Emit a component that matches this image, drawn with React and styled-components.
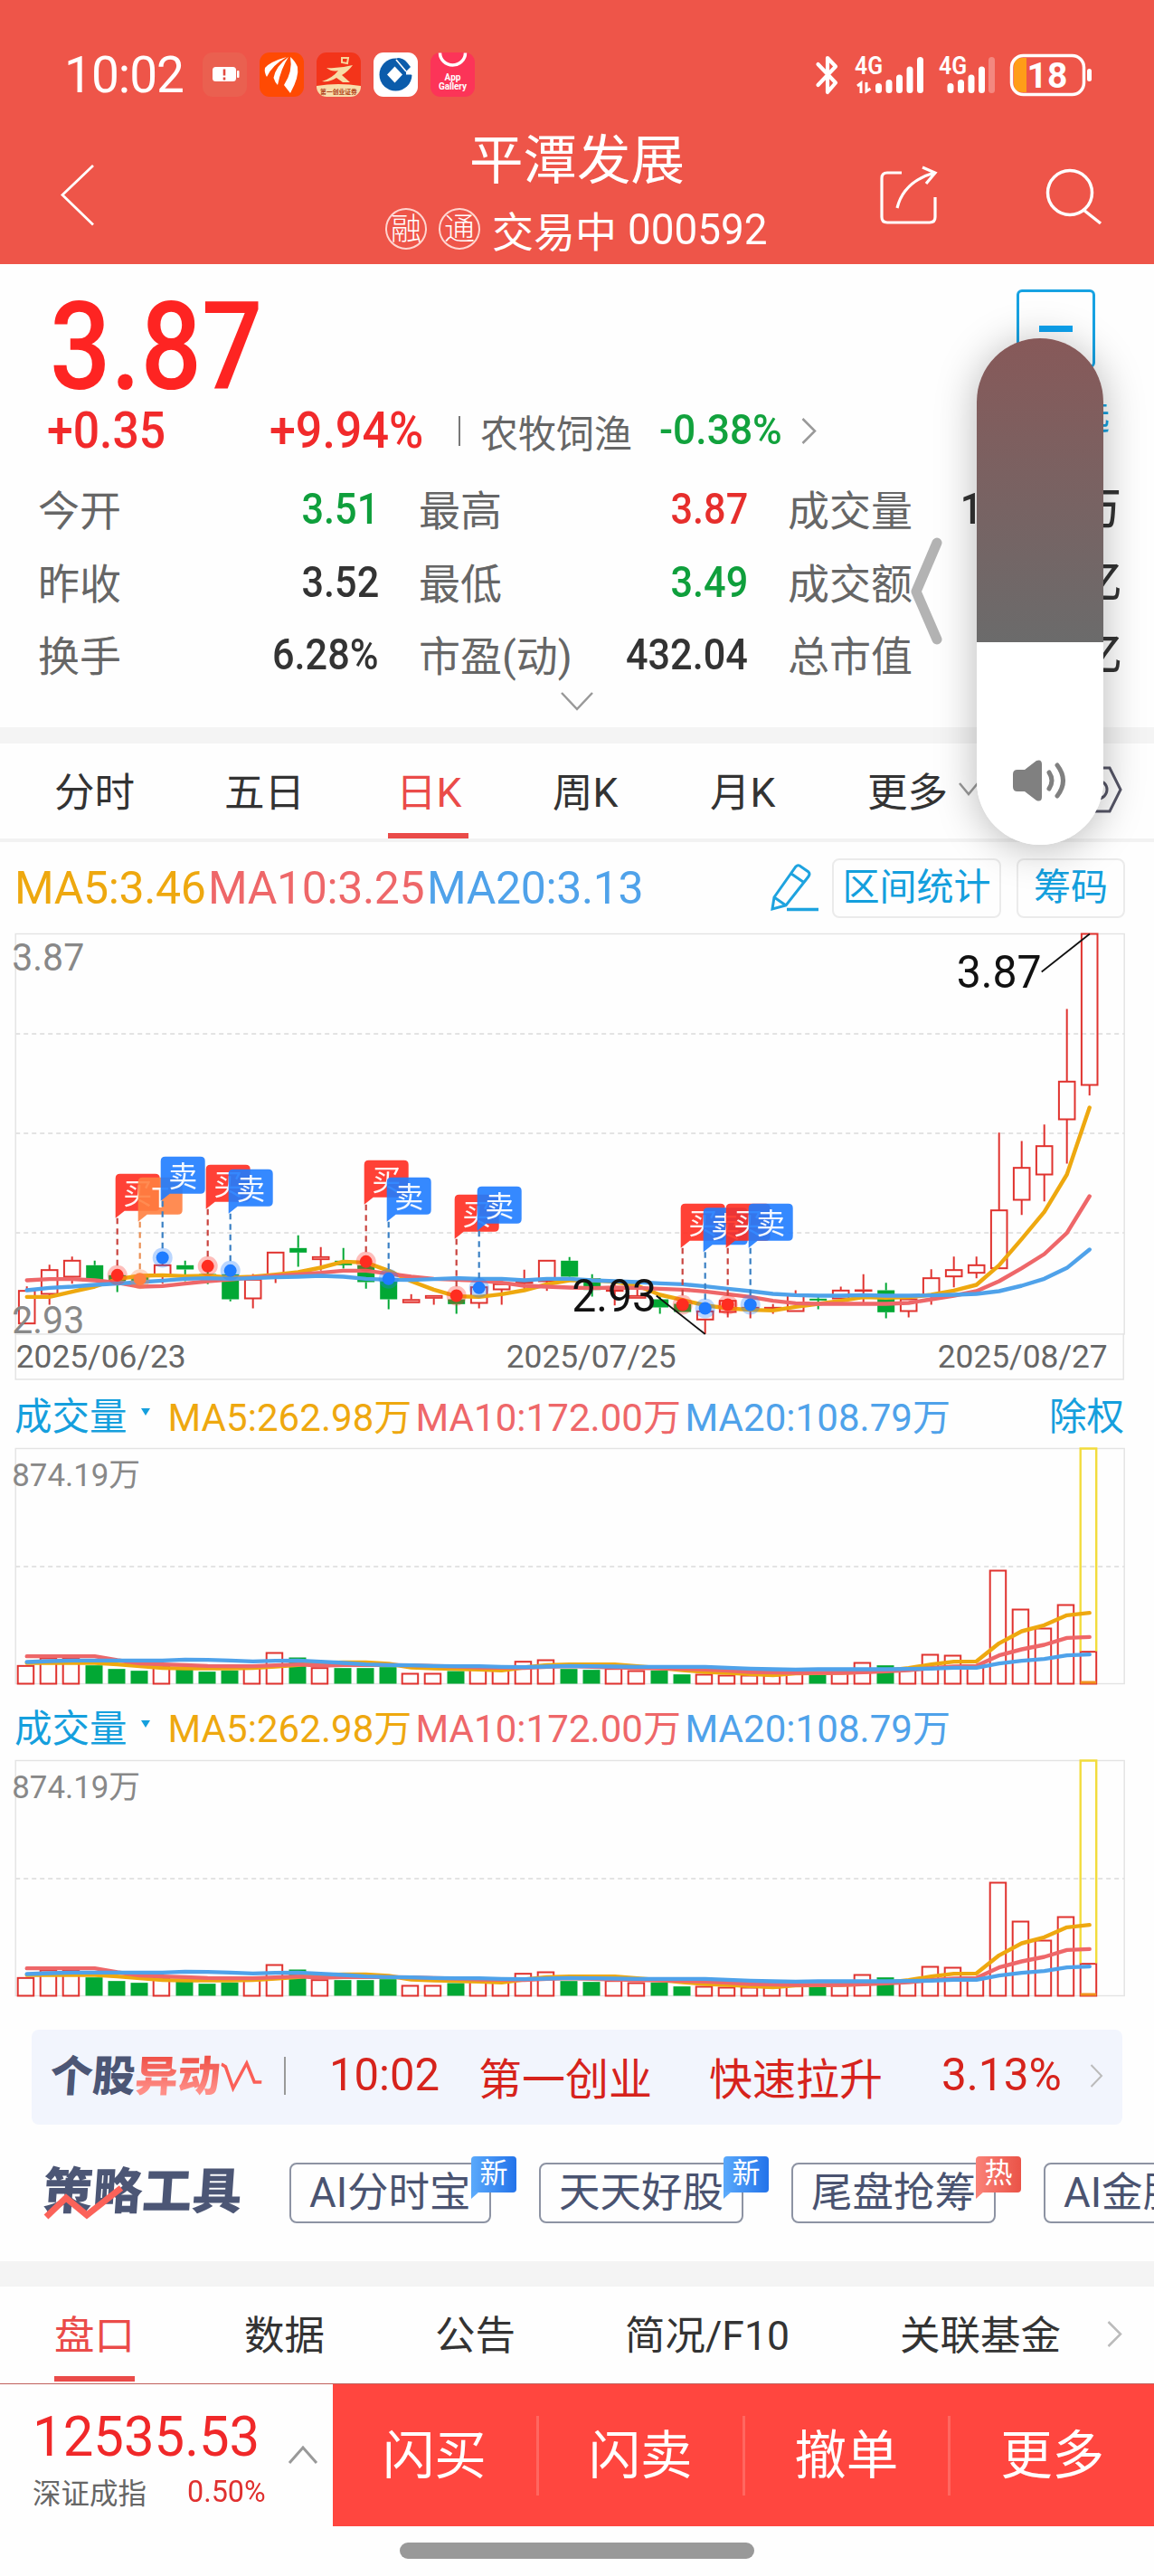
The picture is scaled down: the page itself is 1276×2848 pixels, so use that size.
import React from 'react';
import styled, { createGlobalStyle } from 'styled-components';

const GlobalStyle = createGlobalStyle`
  body {
    margin: 0;
    background: #fff;
    font-family: Roboto, "Noto Sans CJK SC", sans-serif;
  }
  * {
    box-sizing: border-box;
  }
`

const Main = styled.div`
  position: relative;
  width: 1276px;
  height: 2848px;
  overflow: hidden;
  background: #fefefe;
  white-space: nowrap;
`

const Header = styled.div`
  height: 292px;
  background: #ee5549;
  color: #fff;
`

const StatusBar = styled.div`
  display: flex;
  align-items: center;
  height: 127px;
  padding: 38px 68px 0 71px;
`

const Clock = styled.div`
  width: 153px;
  font-size: 55px;
  letter-spacing: -1px;
`

const AppIcons = styled.div`
  display: flex;
  gap: 14px;
  flex: 1;
`

const Signals = styled.svg`
  overflow: visible;
`

const NavBar = styled.div`
  display: flex;
  height: 165px;
  padding: 0 56px 0 67px;
`

const NavIcon = styled.svg`
  display: block;
  margin-top: ${p => p.$top}px;
  margin-left: ${p => p.$left || 0}px;
  flex: none;
`

const Title = styled.div`
  width: 558px;
  margin-left: 288px;
  height: 165px;
`

const StockName = styled.div`
  width: 490px;
  height: 78px;
  line-height: 102px;
  text-align: center;
  font-size: 59.5px;
`

const StockCode = styled.div`
  display: flex;
  align-items: center;
  justify-content: center;
  width: 492px;
  height: 95px;
  font-size: 46px;
  padding-left: 4px;
`

const RoundTag = styled.span`
  width: 46px;
  height: 46px;
  margin-right: 13px;
  border: 2px solid #ffd5d0;
  border-radius: 50%;
  font-size: 34px;
  line-height: 42px;
  text-align: center;
  font-weight: 300;
`

const Trading = styled.span`
  margin-right: 12px;
`

/* figures are set a little narrower than Roboto draws them */
const Num = styled.span`
  display: inline-block;
  transform: scaleX(${p => p.$k || 0.9});
  transform-origin: ${p => p.$from || 'left'} center;
  color: ${p => p.$color || 'inherit'};
  font-size: ${p => p.$size || 48}px;
  font-weight: ${p => p.$weight || 400};
  line-height: 1;
  padding-top: ${p => p.$drop || 0}px;
`

const Quote = styled.div`
  position: relative;
  height: 512px;
`

const BigPrice = styled.div`
  display: flex;
  align-items: center;
  height: 148px;
  padding: 37px 0 0 55px;
`

const ChangeRow = styled.div`
  display: flex;
  align-items: center;
  height: 74px;
  padding: 0 0 1px 52px;
`

const ChangeCell = styled.div`
  width: ${p => p.$w}px;
  flex: none;
  font-size: 42px;
  color: #666;
`

const Separator = styled.i`
  width: 2px;
  height: ${p => p.$h}px;
  margin-right: ${p => p.$right}px;
  background: ${p => p.$color || '#777'};
`

const Stats = styled.div`
  display: grid;
  grid-template-columns: 377px 364px 369px;
  column-gap: 44px;
  grid-auto-rows: 80.5px;
  padding: 7px 0 0 42px;
`

const Stat = styled.div`
  display: flex;
  align-items: center;
  justify-content: space-between;
  font-size: 46px;
  color: #666;
`

const Watch = styled.div`
  position: absolute;
  top: 28px;
  right: 49px;
  width: 120px;
  display: flex;
  flex-direction: column;
  align-items: center;
  color: #16a0df;
  font-size: 40px;
`

const WatchBox = styled.div`
  display: flex;
  align-items: center;
  justify-content: center;
  width: 87px;
  height: 87px;
  margin-bottom: 22px;
  border: 3px solid #17a2e2;
  border-radius: 6px;
  &::after {
    content: "";
    width: 37px;
    height: 7px;
    background: #0da3f0;
  }
`

const ExpandArrow = styled.svg`
  display: block;
  margin: 2px auto 0;
`

const Band = styled.div`
  height: ${p => p.$h}px;
  background: #f4f4f4;
`

const Tabs = styled.div`
  display: flex;
  align-items: stretch;
  height: ${p => p.$h}px;
  padding-left: ${p => p.$left}px;
  padding-bottom: ${p => p.$bottom || 0}px;
  border-bottom: ${p => p.$line || 0}px solid #f2f2f2;
  font-size: 44.5px;
  color: #333;
`

const Tab = styled.div`
  position: relative;
  display: flex;
  align-items: center;
  width: ${p => p.$w}px;
  flex: none;
  padding-bottom: 4px;
  color: ${p => (p.$on ? '#ea4b49' : 'inherit')};
  &::after {
    content: "";
    display: ${p => (p.$on ? 'block' : 'none')};
    position: absolute;
    bottom: 0;
    left: ${p => p.$shift || 0}px;
    width: 89px;
    height: 6px;
    background: #ea4b49;
  }
`

const MaRow = styled.div`
  display: flex;
  align-items: center;
  height: 101px;
  padding-left: 16px;
`

const Ma = styled.span`
  width: ${p => p.$w}px;
  flex: none;
  font-size: ${p => p.$size}px;
  letter-spacing: ${p => p.$ls || 0}px;
  color: ${p => p.$color};
`

const ToolButton = styled.div`
  width: ${p => p.$w}px;
  height: 66px;
  margin-right: 17px;
  border: 2px solid #ebebeb;
  border-radius: 8px;
  color: #139fdd;
  font-size: 41px;
  line-height: 61px;
  text-align: center;
`

const Chart = styled.svg`
  display: block;
  overflow: visible;
`

const VolumeHead = styled.div`
  display: flex;
  align-items: center;
  height: ${p => p.$h}px;
  padding: ${p => p.$top}px 33px 0 16px;
  color: #159fdd;
  font-size: 41.5px;
`

const Triangle = styled.i`
  width: 0;
  height: 0;
  margin: 0 20px 4px 15px;
  border: 5.5px solid transparent;
  border-top: 8px solid #159fdd;
  border-bottom: 0;
`

const ExRight = styled.span`
  margin-left: auto;
`

const Ticker = styled.div`
  display: flex;
  align-items: center;
  height: 105px;
  margin: 37px 35px 0;
  padding: 0 0 4px 21px;
  border-radius: 8px;
  background: #f2f5fd;
  color: #d6231c;
  font-size: 48px;
`

const TickerCell = styled.div`
  width: ${p => p.$w}px;
  flex: none;
`

const Slogan = styled.div`
  display: flex;
  width: ${p => p.$w}px;
  margin-bottom: ${p => p.$mb || 0}px;
  font-size: ${p => p.$size}px;
  font-weight: 900;
  color: #4c5675;
  transform: skewX(-4deg);
  flex: none;
  svg {
    flex: none;
  }
`

const Red = styled.span`
  background: linear-gradient(#ee4c43 20%, #ff8f88 80%);
  background-clip: text;
  color: transparent;
`

const ToolsRow = styled.div`
  display: flex;
  align-items: center;
  height: 151px;
  padding-left: 48px;
`

const ToolLogo = styled.div`
  position: relative;
  width: 272px;
  margin-bottom: 14px;
  flex: none;
  svg {
    position: absolute;
    left: 0;
    bottom: 4px;
  }
`

const Strategy = styled.div`
  position: relative;
  width: ${p => p.$w}px;
  height: 67px;
  margin-right: 53px;
  padding-left: 20px;
  flex: none;
  border: 2px solid #8d93a3;
  border-radius: 8px;
  font-size: 45.5px;
  line-height: 63px;
  color: #4a5370;
`

const Badge = styled.span`
  position: absolute;
  right: -30px;
  top: -9px;
  width: 50px;
  height: 40px;
  border-radius: 4px 4px 4px 0;
  background: ${p => (p.$hot ? 'linear-gradient(90deg, #fa8278, #ea5347)' : 'linear-gradient(90deg, #5aa9fb, #2373ea)')};
  color: #fff;
  font-size: 31px;
  line-height: 38px;
  text-align: center;
  &::after {
    content: "";
    position: absolute;
    left: 0;
    top: 39px;
    border-top: 8px solid ${p => (p.$hot ? '#fa8278' : '#5aa9fb')};
    border-right: 9px solid transparent;
  }
`

const BottomBar = styled.div`
  display: flex;
  height: 158px;
  border-top: 1px solid #c0605c;
`

const IndexPanel = styled.div`
  display: flex;
  width: 368px;
  padding: 27px 0 0 36px;
`

const IndexInfo = styled.div`
  width: 282px;
`

const IndexValue = styled.div`
  height: 70px;
  line-height: 64px;
`

const IndexName = styled.div`
  display: flex;
  align-items: center;
  height: 42px;
`

const IndexLabel = styled.div`
  width: 171px;
  font-size: 31.5px;
  color: #666;
`

const Actions = styled.div`
  display: flex;
  align-items: center;
  flex: 1;
  background: #ff463f;
`

const Action = styled.div`
  flex: 1;
  height: 88px;
  border-left: ${p => (p.$first ? 0 : 3)}px solid #ff6760;
  color: #fff;
  font-size: 57.5px;
  line-height: 89px;
  text-align: center;
`

const HomeBar = styled.div`
  width: 392px;
  height: 18px;
  margin: 18px auto 0;
  border-radius: 9px;
  background: #999;
`

const VolumeSlider = styled.div`
  position: absolute;
  left: 1080px;
  top: 374px;
  display: flex;
  align-items: flex-end;
  justify-content: center;
  width: 140px;
  height: 560px;
  padding-bottom: 48px;
  border-radius: 70px;
  background: linear-gradient(#875959 0, #6b6b6b 336px, #fff 336px);
  box-shadow: 0 4px 46px rgba(0, 0, 0, 0.28);
`

const EdgeHandle = styled.svg`
  position: absolute;
  left: 1002px;
  top: 589px;
`

const Arrow = styled.svg`
  flex: none;
  align-self: center;
`

const RED = '#e0332f'
const GREEN = '#02a834'
const YELLOW = '#eea80f'
const PINK = '#ee6769'
const BLUE = '#4fa2ea'

// trading days sit 25px apart
const px = (i) => 12.5 + i * 25;
// readings are in thirds of a pixel
const py = (v) => (v - 38) / 3;

// [type, body top, body bottom, high, low]
const candles = [
  ['r', 1222, 1330, 1207, 1330], ['r', 1153, 1232, 1135, 1268], ['r', 1122, 1175, 1108, 1198],
  ['g', 1137, 1187, 1122, 1190], ['g', 1170, 1190, 1165, 1226], ['g', 1176, 1194, 1170, 1198],
  ['r', 1137, 1172, 1110, 1198], ['g', 1137, 1151, 1122, 1190], ['g', 1166, 1171, 1140, 1200],
  ['g', 1167, 1250, 1150, 1257], ['r', 1185, 1247, 1166, 1280], ['r', 1095, 1168, 1095, 1196],
  ['g', 1080, 1095, 1038, 1142], ['f', 1108, 1119, 1077, 1155], ['g', 1122, 1137, 1080, 1148],
  ['g', 1137, 1193, 1130, 1215], ['g', 1180, 1250, 1170, 1283], ['f', 1250, 1262, 1233, 1262],
  ['f', 1237, 1247, 1237, 1268], ['g', 1250, 1266, 1240, 1298], ['r', 1210, 1262, 1200, 1280],
  ['r', 1200, 1217, 1180, 1268], ['f', 1192, 1197, 1152, 1222], ['r', 1122, 1190, 1122, 1222],
  ['g', 1122, 1175, 1110, 1178], ['g', 1180, 1219, 1167, 1241], ['f', 1218, 1222, 1190, 1270],
  ['f', 1237, 1247, 1215, 1247], ['g', 1250, 1277, 1237, 1298], ['g', 1265, 1292, 1260, 1292],
  ['r', 1290, 1317, 1285, 1365], ['r', 1255, 1292, 1250, 1310], ['f', 1276, 1280, 1262, 1313],
  ['f', 1276, 1281, 1266, 1298], ['r', 1237, 1289, 1220, 1289], ['g', 1248, 1253, 1237, 1283],
  ['r', 1221, 1247, 1208, 1247], ['f', 1218, 1223, 1167, 1262], ['g', 1220, 1293, 1195, 1313],
  ['r', 1250, 1289, 1250, 1310], ['r', 1180, 1238, 1150, 1268], ['r', 1153, 1174, 1108, 1210],
  ['r', 1137, 1162, 1108, 1180], ['r', 955, 1147, 697, 1147], ['r', 814, 920, 725, 970],
  ['r', 742, 836, 670, 925], ['r', 528, 653, 287, 800], ['r', 38, 539, 38, 574],
]

const ma5 = [1242, 1242, 1225, 1208, 1183, 1172, 1170, 1173, 1172, 1178, 1175, 1168, 1160, 1145, 1125, 1128,
  1155, 1190, 1218, 1240, 1242, 1233, 1220, 1200, 1187, 1187, 1192, 1205, 1235, 1252, 1270, 1280, 1285, 1287,
  1275, 1265, 1255, 1243, 1245, 1243, 1235, 1221, 1202, 1137, 1050, 960, 836, 614]
const ma10 = [1187, 1183, 1183, 1187, 1195, 1208, 1206, 1198, 1190, 1184, 1178, 1172, 1167, 1162, 1155, 1155,
  1165, 1175, 1182, 1185, 1188, 1195, 1205, 1208, 1211, 1213, 1211, 1212, 1215, 1218, 1224, 1233, 1242, 1255,
  1263, 1265, 1265, 1265, 1265, 1262, 1250, 1238, 1223, 1190, 1147, 1100, 1030, 908]
const ma20 = [1220, 1212, 1208, 1202, 1198, 1193, 1188, 1182, 1180, 1182, 1180, 1177, 1175, 1172, 1175, 1182,
  1185, 1186, 1183, 1180, 1182, 1182, 1187, 1182, 1182, 1187, 1190, 1193, 1197, 1200, 1207, 1215, 1223, 1232,
  1236, 1238, 1238, 1236, 1238, 1238, 1237, 1235, 1232, 1223, 1205, 1182, 1146, 1085]

// [day, kind, flag top, dot]
const trades = [
  [4, 'buy', 834, 1170], [5, 't', 846, 1183], [6, 'sell', 777, 1112], [8, 'buy', 804, 1140],
  [9, 'sell', 819, 1155], [15, 'buy', 789, 1125], [16, 'sell', 846, 1182], [19, 'buy', 903, 1238],
  [20, 'sell', 876, 1212], [29, 'buy', 933, 1268], [30, 'sell', 946, 1280], [31, 'buy', 933, 1268],
  [32, 'sell', 933, 1268],
]

const kinds = {
  buy: { text: '买', color: '#ff2c20', line: '#c9443f' },
  sell: { text: '卖', color: '#1f7cff', line: '#3a80c4' },
  t: { text: 'T', color: '#ff7f40', line: '#ea8f53' },
}

const volumes = [
  ['r', 965], ['r', 940], ['r', 940], ['g', 963], ['g', 975], ['g', 981], ['r', 965], ['g', 975],
  ['g', 984], ['g', 980], ['r', 970], ['r', 922], ['g', 937], ['r', 972], ['g', 972], ['g', 972],
  ['g', 969], ['r', 991], ['r', 991], ['g', 982], ['r', 975], ['r', 975], ['r', 951], ['r', 946],
  ['g', 975], ['g', 978], ['r', 975], ['r', 982], ['g', 980], ['g', 993], ['r', 994], ['r', 997],
  ['r', 997], ['r', 997], ['r', 990], ['g', 993], ['r', 985], ['r', 955], ['g', 963], ['r', 980],
  ['r', 928], ['r', 931], ['r', 965], ['r', 649], ['r', 778], ['r', 841], ['r', 763], ['r', 918],
]

const vma5 = [955, 955, 955, 955, 960, 966, 972, 973, 973, 973, 972, 967, 962, 955, 953, 953, 958, 970, 973,
  975, 977, 980, 970, 962, 960, 960, 960, 966, 972, 979, 985, 988, 992, 996, 990, 989, 988, 985, 980, 972,
  960, 951, 950, 890, 850, 830, 797, 789]
const vma10 = [933, 933, 933, 933, 946, 957, 960, 962, 965, 966, 966, 963, 960, 964, 962, 962, 962, 963, 965,
  967, 970, 971, 972, 968, 966, 968, 970, 972, 973, 975, 977, 981, 985, 987, 988, 988, 988, 986, 983, 979,
  972, 967, 965, 930, 910, 895, 872, 869]
const vma20 = [952, 949, 947, 947, 947, 947, 947, 944, 945, 947, 950, 948, 947, 951, 955, 960, 962, 963, 965,
  966, 966, 968, 969, 967, 965, 966, 967, 968, 968, 968, 968, 971, 974, 976, 977, 976, 976, 976, 976, 975,
  974, 971, 971, 957, 948, 942, 930, 927]

const vy = (v) => (v - 244) / 3;

const points = (list, y) => list.map((v, i) => `${px(i)},${y(v)}`).join(' ');

const stats = [
  ['今开', '3.51', '#0f9f3c'], ['最高', '3.87', '#e62e2c'], ['成交量', '119.08', '#333', '万'],
  ['昨收', '3.52', '#333'], ['最低', '3.49', '#0f9f3c'], ['成交额', '4.51', '#333', '亿'],
  ['换手', '6.28%', '#333'], ['市盈(动)', '432.04', '#333'], ['总市值', '74.76', '#333', '亿'],
]

const Lines = ({ a, b, c, y }) => (
  <g fill="none" strokeWidth="4.4" strokeLinecap="round" strokeLinejoin="round">
    <polyline points={points(a, y)} stroke={YELLOW} />
    <polyline points={points(b, y)} stroke={PINK} />
    <polyline points={points(c, y)} stroke={BLUE} />
  </g>
)

const Flag = ({ day, kind, top, dot }) => {
  const { text, color, line } = kinds[kind];
  const x = px(day);
  const y = py(top);
  return (
    <g>
      <line x1={x} x2={x} y1={y + 49} y2={py(dot) - 6} stroke={line} strokeWidth="2.2" strokeDasharray="6.5 5" />
      <circle cx={x} cy={py(dot)} r="11" fill={color} opacity="0.3" />
      <circle cx={x} cy={py(dot)} r="7" fill={color} />
      <path
        d={`M${x - 2} ${y + 49}V${y + 5}q0-5 5-5h39q5 0 5 5v31q0 5-5 5H${x + 8}Z`}
        fill={color}
        opacity="0.9"
      />
      <text x={x + 22.5} y={y + 33} fontSize="32" fill="#fff" textAnchor="middle" opacity="0.95">{text}</text>
    </g>
  )
}

function PriceChart() {
  return (
    <Chart width="1276" height="493" viewBox="-17.2 -0.5 1276 493">
      <g fill="none" stroke="#e3e3e3" strokeWidth="1.4">
        <rect x="0" y="0" width="1226" height="442.5" />
        <path d="M0 442V492.500H1225V442" />
      </g>
      <path d="M0 110.500H1226M0 220.500H1226M0 330.500H1226" stroke="#e3e3e3" strokeWidth="2" strokeDasharray="5 4" />
      {candles.map(([type, top, bottom, high, low], i) => {
        const x = px(i);
        const color = type === 'g' ? GREEN : RED;
        const h = Math.max(py(bottom) - py(top), 2);
        return (
          <g key={i} stroke={color} strokeWidth="2">
            <path d={`M${x} ${py(high)}V${py(top)}M${x} ${py(bottom)}V${py(low)}`} />
            {type === 'g' && <rect x={x - 9.5} y={py(top)} width="19" height={h} fill={GREEN} stroke="none" />}
            {type === 'r' && <rect x={x - 8.8} y={py(top)} width="17.6" height={h} fill="none" />}
            {type === 'f' && <rect x={x - 9} y={py(top) + 0.5} width="18" height={Math.max(h - 1, 1)} fill="#f3908e" strokeWidth="1.6" />}
          </g>
        )
      })}
      <Lines a={ma5} b={ma10} c={ma20} y={py} />
      {trades.map(([day, kind, top, dot]) => (
        <Flag key={day} day={day} kind={kind} top={top} dot={dot} />
      ))}
      <g fontSize="42" fill="#888">
        <text x="-4" y="40" textLength="80" lengthAdjust="spacingAndGlyphs">3.87</text>
        <text x="-4" y="441" textLength="80" lengthAdjust="spacingAndGlyphs">2.93</text>
      </g>
      <g fontSize="50" fill="#111">
        <text x="1040.500" y="59" textLength="94" lengthAdjust="spacingAndGlyphs">3.87</text>
        <text x="615" y="417" textLength="94" lengthAdjust="spacingAndGlyphs">2.93</text>
      </g>
      <path d="M1134.500 42L1187.700 0M708.500 400L762.500 442.500" stroke="#111" strokeWidth="1.8" />
      <g fontSize="34.500" fill="#666">
        <text x="0.500" y="479" textLength="188" lengthAdjust="spacingAndGlyphs">2025/06/23</text>
        <text x="542.500" y="479" textLength="188" lengthAdjust="spacingAndGlyphs">2025/07/25</text>
        <text x="1019.500" y="479" textLength="188" lengthAdjust="spacingAndGlyphs">2025/08/27</text>
      </g>
    </Chart>
  )
}

function VolumeChart() {
  return (
    <Chart width="1276" height="261" viewBox="-17.2 -0.5 1276 261">
      <rect x="0" y="0" width="1226" height="260" fill="none" stroke="#e3e3e3" strokeWidth="1.4" />
      <path d="M0 130.5H1226" stroke="#e3e3e3" strokeWidth="2" strokeDasharray="5 4" />
      {volumes.map(([type, top], i) => (
        type === 'g'
          ? <rect key={i} x={px(i) - 10.2} y={vy(top)} width="19" height={260 - vy(top)} fill={GREEN} />
          : <rect key={i} x={px(i) - 10} y={vy(top)} width="17.5" height={260 - vy(top)} fill="none" stroke={RED} strokeWidth="2" />
      ))}
      <path d="M1177.500 224V0h17.500V224" fill="none" stroke="#f2dc3c" strokeWidth="2.400" />
      <path d="M1177.500 258.500h17.500" stroke="#f0931e" strokeWidth="3" />
      <Lines a={vma5} b={vma10} c={vma20} y={vy} />
      <text x="-4" y="41.500" fontSize="35.500" fill="#888" textLength="142" lengthAdjust="spacingAndGlyphs">874.19万</text>
    </Chart>
  )
}

const VolumeMa = () => (
  <>
    <Ma $w={274} $size={42} $ls={0.05} $color={YELLOW}>MA5:262.98万</Ma>
    <Ma $w={298} $size={42} $ls={0.05} $color={PINK}>MA10:172.00万</Ma>
    <Ma $w={300} $size={42} $ls={0.05} $color={BLUE}>MA20:108.79万</Ma>
  </>
)

const Chevron = ({ color = '#999', w = 17, h = 29, sw = 2.5 }) => (
  <Arrow width={w} height={h} fill="none" stroke={color} strokeWidth={sw}>
    <path d={`M1.500 1L${w - 2} ${h / 2}L1.500 ${h - 1}`} />
  </Arrow>
)

function StatusIcons() {
  return (
    <AppIcons>
      <svg width="49" height="49" viewBox="0 0 49 49">
        <rect width="49" height="49" rx="11" fill="#ea6050" />
        <rect x="11" y="16" width="26" height="16" rx="3.500" fill="#fff" />
        <rect x="38" y="20" width="2.500" height="8" rx="1" fill="#fff" />
        <path d="M24 18.500v7M24 27.500v3" stroke="#e2493f" strokeWidth="2.600" />
      </svg>
      <svg width="49" height="49" viewBox="0 0 49 49">
        <rect width="49" height="49" rx="11" fill="#ff4a03" />
        <g fill="#fff">
          <path d="M30 5Q12 10 6 17 5 22 8 27 14 14 30 5Z" />
          <path d="M32 5Q18 15 15.500 28 17 33 20 36 24 17 32 5Z" />
          <path d="M34 5q3 16-7 31 3 4 7 9 10-18 8-29Q39 9 34 5Z" />
        </g>
      </svg>
      <svg width="49" height="49" viewBox="0 0 49 49">
        <defs>
          <clipPath id="round"><rect width="49" height="49" rx="11" /></clipPath>
        </defs>
        <g clipPath="url(#round)">
          <rect width="49" height="49" fill="#f3341a" />
          <path d="M0 37Q24 33 49 37V49H0Z" fill="#f8ddab" />
        </g>
        <path d="M28 6l7 0-1 6-6-1Z" fill="none" stroke="#f8d59a" strokeWidth="2" />
        <path d="M11 17Q25 18 40 14 35 21 28 25L37 33H29L22 28Q15 33 6 32 18 28 24 20 17 22 11 17Z" fill="#f8dca6" />
        <text x="24.500" y="46" fontSize="6.800" fontWeight="700" fill="#b0441c" textAnchor="middle">第一创业证券</text>
      </svg>
      <svg width="49" height="49" viewBox="0 0 49 49">
        <rect width="49" height="49" rx="11" fill="#fff" />
        <circle cx="24.500" cy="24.500" r="18" fill="#0b5cab" />
        <path d="M36 7L44 17V25H36Z" fill="#fff" />
        <path d="M26 6Q33 6 37 11L41 16 36 21Z" fill="#0b5cab" />
        <path d="M33 24.500H42Q41 31 38 34H28Z" fill="#0b5cab" />
        <path d="M23.500 15.500L32 24.500 23.500 33.500 15 24.500Z" fill="#fff" />
        <path d="M25 8L36 21" stroke="#fff" strokeWidth="1.600" fill="none" />
      </svg>
      <svg width="49" height="49" viewBox="0 0 49 49">
        <rect width="49" height="49" rx="11" fill="#fc3458" />
        <path d="M10.500 0.500a14 13.500 0 0 0 28 0" fill="none" stroke="#fff" strokeWidth="3.500" />
        <g fill="#fff" fontSize="10" fontWeight="700" textAnchor="middle">
          <text x="24.500" y="31">App</text>
          <text x="24.500" y="41" textLength="31">Gallery</text>
        </g>
      </svg>
    </AppIcons>
  )
}

const SignalBattery = () => (
  <Signals width="308" height="50" viewBox="0 0 308 50" fill="none">
    <path d="M4.500 13L24 33.500 15 44V6l9 9.500L4.500 36" stroke="#fff" strokeWidth="4.200" strokeLinecap="round" strokeLinejoin="round" />
    <g fill="#fff" fontSize="28" fontWeight="600">
      <text x="45" y="24" textLength="31" lengthAdjust="spacingAndGlyphs">4G</text>
      <text x="138" y="24" textLength="31" lengthAdjust="spacingAndGlyphs">4G</text>
    </g>
    <g stroke="#fff" strokeWidth="7" strokeLinecap="round">
      <path d="M71.500 37.500v4M83 33.500v8M94.500 28v13.500M106 19v22.500M117.500 8.500v33" />
      <path d="M151 37.500v4M162.500 33.500v8M174 28v13.500M185.500 19v22.500" />
      <path d="M196.500 8.500v33" opacity="0.300" />
    </g>
    <path d="M48 37l4-3v11M58 33v10l4.500-3" stroke="#fff" strokeWidth="3" />
    <path d="M235 6h-5q-9 0-9 9v20q0 9 9 9h5Z" fill="#ff9d18" />
    <rect x="218.500" y="3.500" width="80" height="43" rx="13" stroke="#fff" strokeWidth="3.500" />
    <rect x="302" y="18" width="5" height="14" rx="2.500" fill="#fff" />
    <text x="258" y="39" fontSize="39" fontWeight="700" fill="#fff" textAnchor="middle">18</text>
  </Signals>
)

function App() {
  return (
    <Main>
      <GlobalStyle />
      <Header>
        <StatusBar>
          <Clock>10:02</Clock>
          <StatusIcons />
          <SignalBattery />
        </StatusBar>
        <NavBar>
          <NavIcon $top={54} width="38" height="70" fill="none" stroke="#fff" strokeWidth="2.800">
            <path d="M36 2L2 34.500 36 67.500" />
          </NavIcon>
          <Title>
            <StockName>平潭发展</StockName>
            <StockCode>
              <RoundTag>融</RoundTag>
              <RoundTag>通</RoundTag>
              <Trading>交易中</Trading>
              <Num $size={48} $k={0.955} $drop={2}>000592</Num>
            </StockCode>
          </Title>
          <NavIcon $top={56} $left={26} width="64" height="66" fill="none" stroke="#fff" strokeWidth="3.200">
            <path d="M24 8H8Q2 8 2 14V57q0 6 6 6H55q6 0 6-6V35" />
            <path d="M19 47Q26 18 60 8M47 2L61 8 51 20" />
          </NavIcon>
          <NavIcon $top={59} $left={119} width="64" height="66" fill="none" stroke="#fff" strokeWidth="3.500">
            <circle cx="27" cy="27" r="24.500" />
            <path d="M42 46L61 61" />
          </NavIcon>
        </NavBar>
      </Header>

      <Quote>
        <BigPrice><Num $size={135} $weight={500} $k={0.88} $color="#fe2422">3.87</Num></BigPrice>
        <ChangeRow>
          <ChangeCell $w={246}><Num $size={55} $weight={500} $k={0.94} $color="#f12a2b">+0.35</Num></ChangeCell>
          <ChangeCell $w={209}><Num $size={55} $weight={500} $k={0.945} $color="#f12a2b">+9.94%</Num></ChangeCell>
          <Separator $h={33} $right={22} />
          <ChangeCell $w={198}>农牧饲渔</ChangeCell>
          <ChangeCell $w={157}><Num $size={46} $weight={500} $k={0.965} $color="#12a23d">-0.38%</Num></ChangeCell>
          <Chevron />
        </ChangeRow>
        <Stats>
          {stats.map(([label, value, color, unit]) => (
            <Stat key={label}>
              <span>{label}</span>
              <Num $from="right" $weight={500} $drop={4} $color={color}>{value}{unit}</Num>
            </Stat>
          ))}
        </Stats>
        <ExpandArrow width="36" height="22" fill="none" stroke="#999" strokeWidth="2.500">
          <path d="M1 1L18 19 35 1" />
        </ExpandArrow>
        <Watch>
          <WatchBox />
          删自选
        </Watch>
      </Quote>

      <Band $h={18} />
      <Tabs $h={109} $left={60} $line={4}>
        <Tab $w={188}>分时</Tab>
        <Tab $w={190}>五日</Tab>
        <Tab $w={173} $on $shift={-9}>日K</Tab>
        <Tab $w={174}>周K</Tab>
        <Tab $w={174}>月K</Tab>
        <Tab $w={101}>更多</Tab>
        <Tab $w={127}>
          <svg width="22" height="16" fill="none" stroke="#999" strokeWidth="2.500">
            <path d="M1 1L11 13 21 1" />
          </svg>
        </Tab>
        <Tab $w={60}>
          <svg width="54" height="52" fill="none" stroke="#556" strokeWidth="3">
            <path d="M14 2H40L52 26 40 50H14L2 26Z" />
            <circle cx="27" cy="26" r="10" />
          </svg>
        </Tab>
      </Tabs>

      <MaRow>
        <Ma $w={214} $size={50} $ls={-0.35} $color={YELLOW}>MA5:3.46</Ma>
        <Ma $w={242} $size={50} $ls={-0.35} $color={PINK}>MA10:3.25</Ma>
        <Ma $w={379} $size={50} $ls={-0.35} $color={BLUE}>MA20:3.13</Ma>
        <svg width="69" height="56" fill="none" stroke="#1ea3df" strokeWidth="3">
          <path d="M3 51L5 38 29 4Q31 2 33 3L43 10Q45 12 43 15L18 47Z M5 38L18 47M24 12L37 21" />
          <path d="M19 51.500H54" strokeWidth="3.500" />
        </svg>
        <ToolButton $w={187}>区间统计</ToolButton>
        <ToolButton $w={120}>筹码</ToolButton>
      </MaRow>
      <PriceChart />

      <VolumeHead $h={76} $top={0}>
        成交量<Triangle />
        <VolumeMa />
        <ExRight>除权</ExRight>
      </VolumeHead>
      <VolumeChart />
      <VolumeHead $h={84} $top={7}>
        成交量<Triangle />
        <VolumeMa />
      </VolumeHead>
      <VolumeChart />

      <Ticker>
        <Slogan $w={258} $size={47} $mb={7}>
          个股<Red>异动</Red>
          <svg width="50" height="66" fill="none" stroke="#fb5f57" strokeWidth="3.500">
            <path d="M0 25L5 28 15 52 28 24 38 45 46 45" />
          </svg>
        </Slogan>
        <Separator $h={42} $right={48} $color="#999" />
        <TickerCell $w={165}><Num $size={50} $k={0.98} $drop={3}>10:02</Num></TickerCell>
        <TickerCell $w={255}>第一创业</TickerCell>
        <TickerCell $w={257}>快速拉升</TickerCell>
        <TickerCell $w={164}><Num $size={50} $k={0.99} $drop={3}>3.13%</Num></TickerCell>
        <Chevron color="#bbb" w={15} h={26} sw={2} />
      </Ticker>

      <ToolsRow>
        <ToolLogo>
          <Slogan $w={226} $size={55}>策略工具</Slogan>
          <svg width="96" height="38" fill="none" stroke="#fb6259" strokeWidth="7">
            <path d="M3 35L25 14 48 33 86 3" />
          </svg>
        </ToolLogo>
        <Strategy $w={223}>AI分时宝<Badge>新</Badge></Strategy>
        <Strategy $w={226}>天天好股<Badge>新</Badge></Strategy>
        <Strategy $w={226}>尾盘抢筹<Badge $hot>热</Badge></Strategy>
        <Strategy $w={226}>AI金股</Strategy>
      </ToolsRow>

      <Band $h={28} />
      <Tabs $h={107} $left={60} $bottom={2}>
        <Tab $w={210} $on>盘口</Tab>
        <Tab $w={211}>数据</Tab>
        <Tab $w={210}>公告</Tab>
        <Tab $w={304}>简况/F10</Tab>
        <Tab $w={229}>关联基金</Tab>
        <Chevron color="#bbb" />
      </Tabs>

      <BottomBar>
        <IndexPanel>
          <IndexInfo>
            <IndexValue><Num $size={62} $k={0.965} $color="#f02829">12535.53</Num></IndexValue>
            <IndexName>
              <IndexLabel>深证成指</IndexLabel>
              <Num $size={34} $k={0.95} $color="#e0302f">0.50%</Num>
            </IndexName>
          </IndexInfo>
          <NavIcon $top={40} width="34" height="22" fill="none" stroke="#999" strokeWidth="3">
            <path d="M2 20L17 3 32 20" />
          </NavIcon>
        </IndexPanel>
        <Actions>
          <Action $first>闪买</Action>
          <Action>闪卖</Action>
          <Action>撤单</Action>
          <Action>更多</Action>
        </Actions>
      </BottomBar>
      <HomeBar />

      <EdgeHandle width="44" height="130" fill="none" stroke="#b3b3b3" strokeWidth="11" strokeLinecap="round" strokeLinejoin="round">
        <path d="M34 11L11 65 34 118" />
      </EdgeHandle>
      <VolumeSlider>
        <svg width="62" height="46" fill="#808080">
          <path d="M6 11H14L27 1Q33 -1 33 5V41Q33 47 27 45L14 35H6Q1 35 1 30V16Q1 11 6 11Z" />
          <path d="M41 14Q47 23 41 32M50 6Q63 23 50 40" fill="none" stroke="#808080" strokeWidth="5" strokeLinecap="round" />
        </svg>
      </VolumeSlider>
    </Main>
  )
}

export default App;
